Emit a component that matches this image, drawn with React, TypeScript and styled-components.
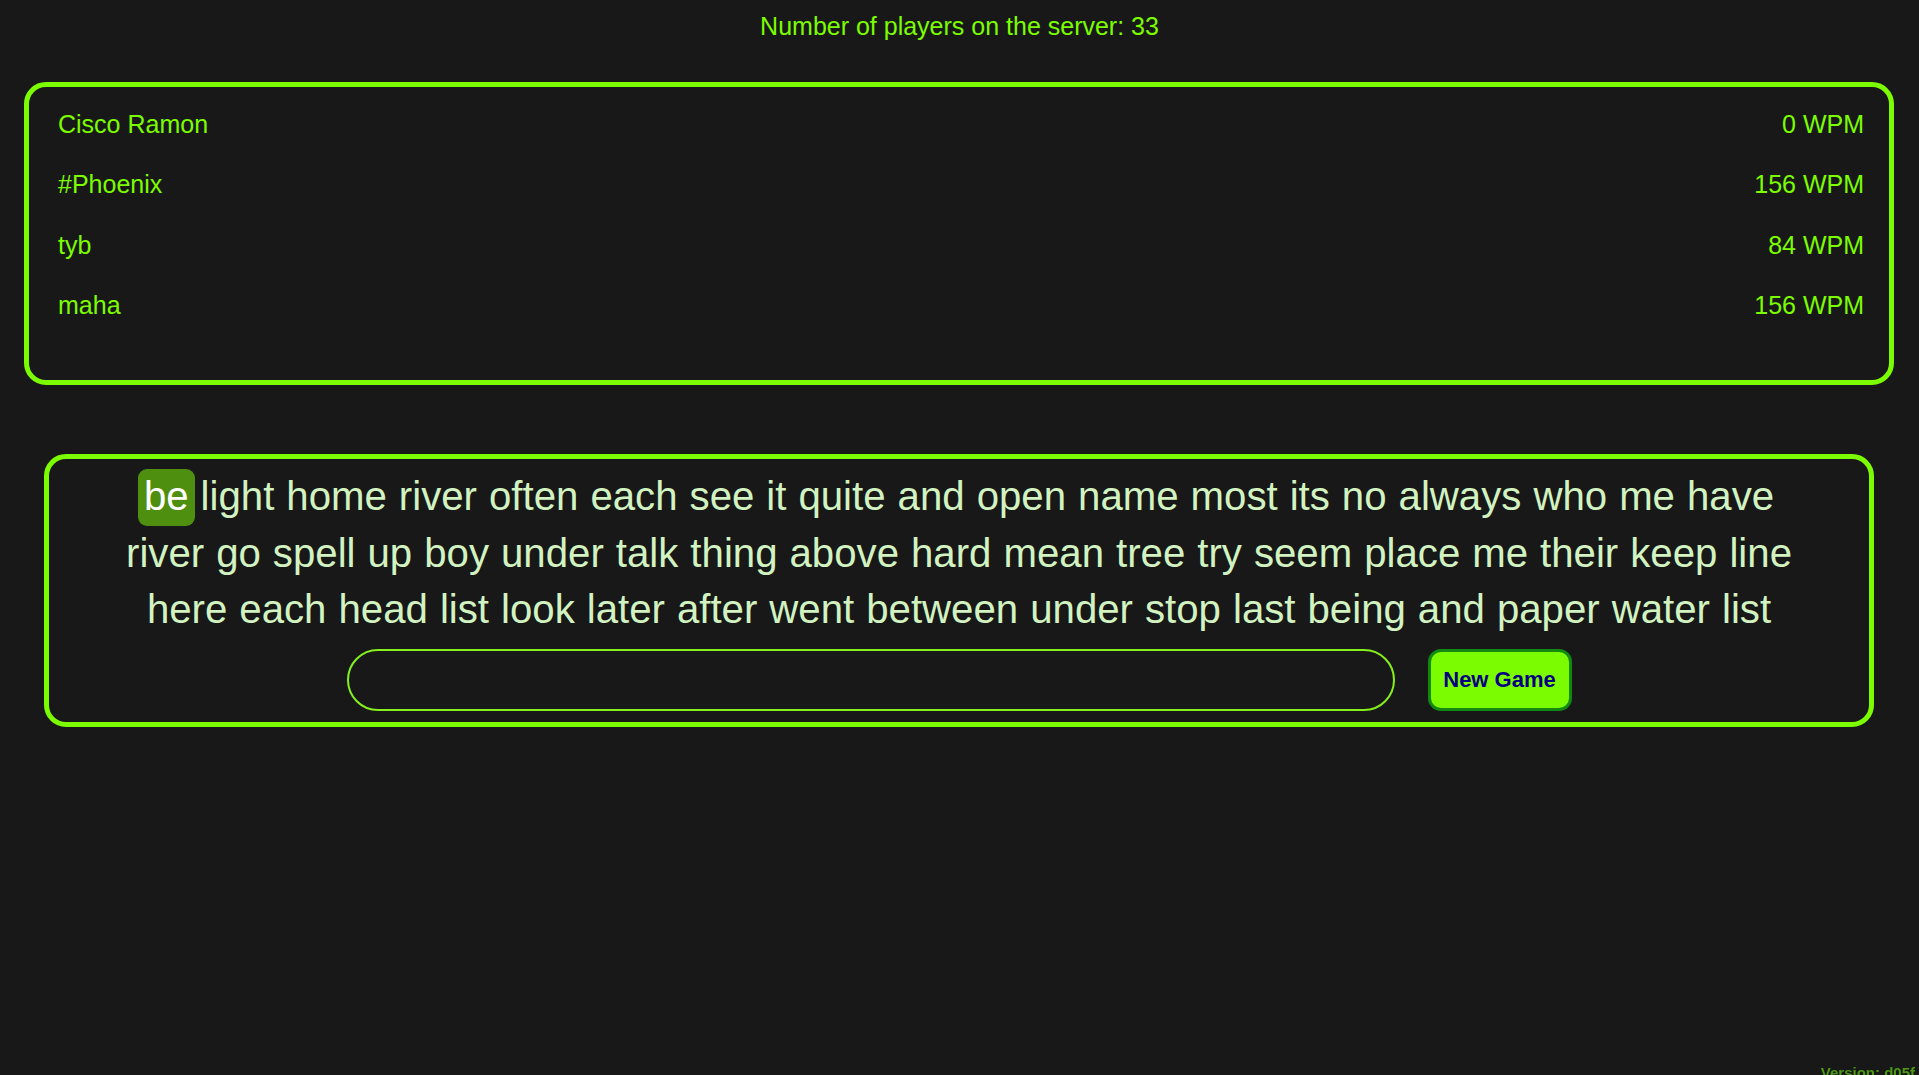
import React from "react";
import styled, { createGlobalStyle } from "styled-components";

const GlobalStyle = createGlobalStyle`
  html, body {
    margin: 0;
    padding: 0;
    background-color: #181818;
    font-family: "Liberation Sans", Arial, sans-serif;
  }
`;

interface Player {
  name: string;
  wpm: number;
}

const players: Player[] = [
  { name: "Cisco Ramon", wpm: 0 },
  { name: "#Phoenix", wpm: 156 },
  { name: "tyb", wpm: 84 },
  { name: "maha", wpm: 156 },
];

const passage =
  "be light home river often each see it quite and open name most its no always who me have river go spell up boy under talk thing above hard mean tree try seem place me their keep line here each head list look later after went between under stop last being and paper water list";

export default function App() {
  const words = passage.split(" ");
  return (
    <>
      <GlobalStyle />
      <StPage>
        <StHeader>Number of players on the server: 33</StHeader>
        <StPlayers>
          {players.map((p) => (
            <StPlayerRow key={p.name}>
              <span>{p.name}</span>
              <span>{p.wpm} WPM</span>
            </StPlayerRow>
          ))}
        </StPlayers>
        <StGameBox>
          <StWords>
            {words.map((w, i) => (
              <StWord key={i} $current={i === 0}>
                {w}
              </StWord>
            ))}
          </StWords>
          <StControls>
            <StInput type="text" />
            <StButton>New Game</StButton>
          </StControls>
        </StGameBox>
      </StPage>
      <StVersion>Version: d05f</StVersion>
    </>
  );
}

const StPage = styled.div`
  display: flex;
  flex-direction: column;
  min-height: 100vh;
`;

const StHeader = styled.div`
  color: #7cfc00;
  font-size: 25px;
  line-height: 28px;
  text-align: center;
  padding-top: 12px;
  margin-bottom: 42px;
`;

const StPlayers = styled.div`
  margin: 0 25px 0 24px;
  border: 5px solid #7cfc00;
  border-radius: 22px;
  padding: 7px 25px 44px 29px;
`;

const StPlayerRow = styled.div`
  display: flex;
  justify-content: space-between;
  align-items: center;
  height: 60.5px;
  color: #7cfc00;
  font-size: 25px;
`;

const StGameBox = styled.div`
  margin: 69px 45px 0 44px;
  border: 5px solid #7cfc00;
  border-radius: 22px;
  padding: 10px 20px 11px;
  display: flex;
  flex-direction: column;
  align-items: center;
`;

const StWords = styled.div`
  display: flex;
  flex-wrap: wrap;
  justify-content: center;
  max-width: 1700px;
`;

const StWord = styled.span<{ $current?: boolean }>`
  font-size: 40.2px;
  line-height: 56.5px;
  padding: 0 6px;
  border-radius: 9px;
  color: ${(p) => (p.$current ? "#ffffff" : "#d2f3c1")};
  background-color: ${(p) => (p.$current ? "#4e8f10" : "transparent")};
`;

const StControls = styled.div`
  display: flex;
  justify-content: center;
  gap: 33px;
  margin-top: 10px;
`;

const StInput = styled.input`
  box-sizing: border-box;
  width: 1048px;
  height: 62px;
  border: 2px solid #84f01c;
  border-radius: 31px;
  background: transparent;
  outline: none;
  color: #d2f3c1;
  font-size: 28px;
  padding: 0 24px;
`;

const StButton = styled.button`
  box-sizing: border-box;
  width: 144px;
  height: 62px;
  background-color: #7cfc00;
  border: 3px solid #128a12;
  border-radius: 13px;
  color: #000080;
  font-family: "Liberation Sans", Arial, sans-serif;
  font-weight: bold;
  font-size: 22px;
  cursor: pointer;
`;

const StVersion = styled.div`
  position: fixed;
  right: 4px;
  bottom: -6px;
  color: #4c9a14;
  font-size: 15px;
  font-weight: bold;
`;
